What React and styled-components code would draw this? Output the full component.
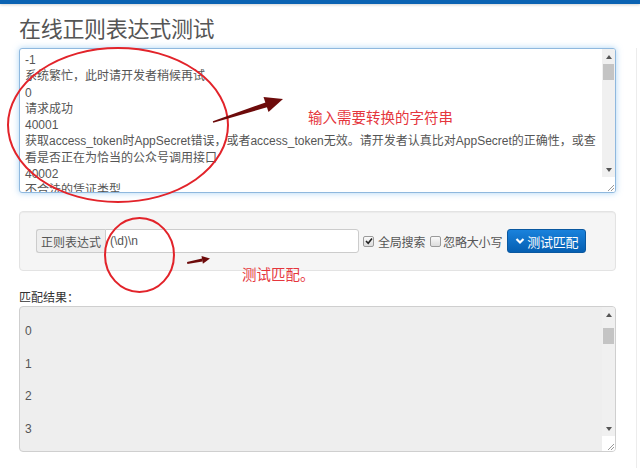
import React from 'react';
import styled, { createGlobalStyle } from 'styled-components';

const Global = createGlobalStyle`
  html, body { margin: 0; padding: 0; background: #fff; }
  body { font-family: "Liberation Sans", "Noto Sans CJK SC", sans-serif; }
  * { box-sizing: border-box; }
`;

const Page = styled.div`
  position: relative;
  width: 640px;
  height: 468px;
  overflow: hidden;
  background: #fff;
  display: flex;
  flex-direction: column;
`;

const TopBar = styled.div`
  height: 4px;
  flex-shrink: 0;
  background: #0b63b3;
  box-shadow: 0 1px 3px rgba(0, 0, 0, 0.18);
`;

const Body = styled.div`
  display: flex;
  flex: 1;
`;

const Main = styled.main`
  width: 616px;
  padding-left: 19px;
  display: flex;
  flex-direction: column;
`;

const Aside = styled.aside`
  margin-left: 20px;
  margin-top: 44px;
  border-left: 1px solid #ececec;
  flex: 1;
`;

const Title = styled.h1`
  margin: 8px 0 0;
  font: 400 22px/30px "Noto Sans CJK SC", sans-serif;
  color: #555;
  letter-spacing: -0.3px;
`;

const TextBox = styled.div`
  margin-top: 6px;
  height: ${(p) => p.$h}px;
  display: flex;
  background: ${(p) => (p.$readonly ? '#eee' : '#fff')};
  border: 1px solid ${(p) => (p.$readonly ? '#cfcfcf' : '#8fb8de')};
  border-radius: 3px;
  box-shadow: ${(p) =>
    p.$readonly ? 'none' : '0 0 6px rgba(102, 175, 233, 0.55)'};
  overflow: hidden;
`;

const TextContent = styled.div`
  flex: 1;
  padding: 3px 4px 0 5px;
  font-size: 12px;
  line-height: 16.25px;
  color: #555;
  white-space: pre;
  overflow: hidden;
`;

const ResultContent = styled.div`
  flex: 1;
  padding: 8px 4px 0 5px;
  font-size: 12px;
  line-height: 32.6px;
  color: #555;
  overflow: hidden;
`;

const Line = styled.div``;

const ScrollCol = styled.div`
  width: 13px;
  display: flex;
  flex-direction: column;
  flex-shrink: 0;
`;

const Track = styled.div`
  flex: 1;
  background: #f0f0f0;
  display: flex;
  flex-direction: column;
  align-items: center;
`;

const ArrowBtn = styled.div`
  height: 15px;
  width: 100%;
  display: flex;
  align-items: center;
  justify-content: center;
  &::after {
    content: '';
    border-left: 3.5px solid transparent;
    border-right: 3.5px solid transparent;
    ${(p) =>
      p.$down
        ? 'border-top: 4px solid #555;'
        : 'border-bottom: 4px solid #555;'}
  }
`;

const Thumb = styled.div`
  width: 11px;
  height: 16px;
  margin-top: ${(p) => p.$offset}px;
  background: #c4c4c4;
`;

const Spacer = styled.div`
  flex: 1;
`;

const Corner = styled.div`
  height: 15px;
  background: #fff;
  display: flex;
  align-items: flex-end;
  justify-content: flex-end;
`;

const Scrollbar = ({ offset = 0 }) => (
  <ScrollCol>
    <Track>
      <ArrowBtn />
      <Thumb $offset={offset} />
      <Spacer />
      <ArrowBtn $down />
    </Track>
    <Corner>
      <svg width="9" height="9" viewBox="0 0 9 9">
        <path d="M8 2 L2 8 M8 5 L5 8" stroke="#999" strokeWidth="1" />
      </svg>
    </Corner>
  </ScrollCol>
);

const Well = styled.div`
  margin-top: 18px;
  height: 60px;
  display: flex;
  align-items: center;
  padding: 0 16px;
  background: #f5f5f5;
  border: 1px solid #e3e3e3;
  border-radius: 4px;
  box-shadow: inset 0 1px 1px rgba(0, 0, 0, 0.04);
`;

const InputGroup = styled.div`
  display: flex;
  height: 24px;
`;

const Addon = styled.span`
  width: 69px;
  display: flex;
  align-items: center;
  justify-content: center;
  background: #eee;
  border: 1px solid #ccc;
  border-right: 0;
  border-radius: 3px 0 0 3px;
  font-size: 12px;
  color: #555;
`;

const Input = styled.div`
  width: 254px;
  display: flex;
  align-items: center;
  padding: 0 4px;
  background: #fff;
  border: 1px solid #ccc;
  border-radius: 0 3px 3px 0;
  font-size: 12px;
  color: #555;
`;

const CheckLabel = styled.label`
  display: flex;
  align-items: center;
  margin-left: ${(p) => p.$ml}px;
  font-size: 12px;
  color: #555;
  gap: ${(p) => p.$gap}px;
  letter-spacing: -0.2px;
`;

const Box = styled.span`
  width: 11px;
  height: 11px;
  border: 1px solid #9a9a9a;
  border-radius: 2px;
  background: linear-gradient(#fafafa, #dcdcdc);
  display: flex;
  align-items: center;
  justify-content: center;
`;

const Button = styled.button`
  margin-left: 5px;
  width: 79px;
  height: 24px;
  display: flex;
  align-items: center;
  justify-content: center;
  gap: 2px;
  padding: 0;
  border: 1px solid #0a58a0;
  border-radius: 3px;
  background: linear-gradient(#1a82dc, #055fb2);
  color: #fff;
  font: 400 13px "Noto Sans CJK SC", sans-serif;
  letter-spacing: -0.3px;
`;

const ResultLabel = styled.div`
  margin-top: 19px;
  font-size: 12px;
  line-height: 16px;
  color: #333;
`;

const ResultBox = styled(TextBox)`
  margin-top: 0;
  border-radius: 4px;
`;

const Overlay = styled.svg`
  position: absolute;
  left: 0;
  top: 0;
  pointer-events: none;
`;

const Note = styled.span`
  position: absolute;
  left: ${(p) => p.$x}px;
  top: ${(p) => p.$y}px;
  font: 400 14.5px/18px "Noto Sans CJK SC", sans-serif;
  color: #e5363d;
  white-space: nowrap;
`;

const lines = [
  '-1',
  '系统繁忙，此时请开发者稍候再试',
  '0',
  '请求成功',
  '40001',
  '获取access_token时AppSecret错误，或者access_token无效。请开发者认真比对AppSecret的正确性，或查',
  '看是否正在为恰当的公众号调用接口',
  '40002',
  '不合法的凭证类型',
];

const results = ['0', '1', '2', '3'];

export default function App() {
  return (
    <Page>
      <Global />
      <TopBar />
      <Body>
        <Main>
          <Title>在线正则表达式测试</Title>
          <TextBox $h={145}>
            <TextContent>
              {lines.map((l, i) => (
                <Line key={i}>{l}</Line>
              ))}
            </TextContent>
            <Scrollbar offset={0} />
          </TextBox>
          <Well>
            <InputGroup>
              <Addon>正则表达式</Addon>
              <Input>(\d)\n</Input>
            </InputGroup>
            <CheckLabel $ml={4} $gap={4}>
              <Box>
                <svg width="8" height="8" viewBox="0 0 8 8">
                  <path d="M1 4 L3.2 6.3 L7 1.5" stroke="#222" strokeWidth="1.6" fill="none" />
                </svg>
              </Box>
              全局搜索
            </CheckLabel>
            <CheckLabel $ml={5} $gap={2}>
              <Box />
              忽略大小写
            </CheckLabel>
            <Button>
              <svg width="10" height="8" viewBox="0 0 10 8">
                <path d="M1.5 2 L5 5.5 L8.5 2" stroke="#fff" strokeWidth="2.2" fill="none" />
              </svg>
              测试匹配
            </Button>
          </Well>
          <ResultLabel>匹配结果：</ResultLabel>
          <ResultBox $h={146} $readonly>
            <ResultContent>
              {results.map((r) => (
                <Line key={r}>{r}</Line>
              ))}
            </ResultContent>
            <Scrollbar offset={6} />
          </ResultBox>
        </Main>
        <Aside />
      </Body>

      <Overlay width="640" height="468" viewBox="0 0 640 468">
        <ellipse cx="118" cy="125" rx="110" ry="77" fill="none" stroke="#e2232a" strokeWidth="2" />
        <polygon points="212.8,121.2 213.2,122.8 267.8,107 266.2,102.2" fill="#6d0b0b" />
        <polygon points="283,99 263.5,97 268.5,112" fill="#6d0b0b" />
        <ellipse cx="139.5" cy="255" rx="34.5" ry="37" fill="none" stroke="#e2232a" strokeWidth="2" />
        <polygon points="187,262 187.4,264 202.5,261.5 202,258.5" fill="#6d0b0b" />
        <polygon points="210,258.5 201.5,256 202.9,263.8" fill="#6d0b0b" />
      </Overlay>
      <Note $x={308} $y={108}>输入需要转换的字符串</Note>
      <Note $x={242} $y={265}>测试匹配。</Note>
    </Page>
  );
}
